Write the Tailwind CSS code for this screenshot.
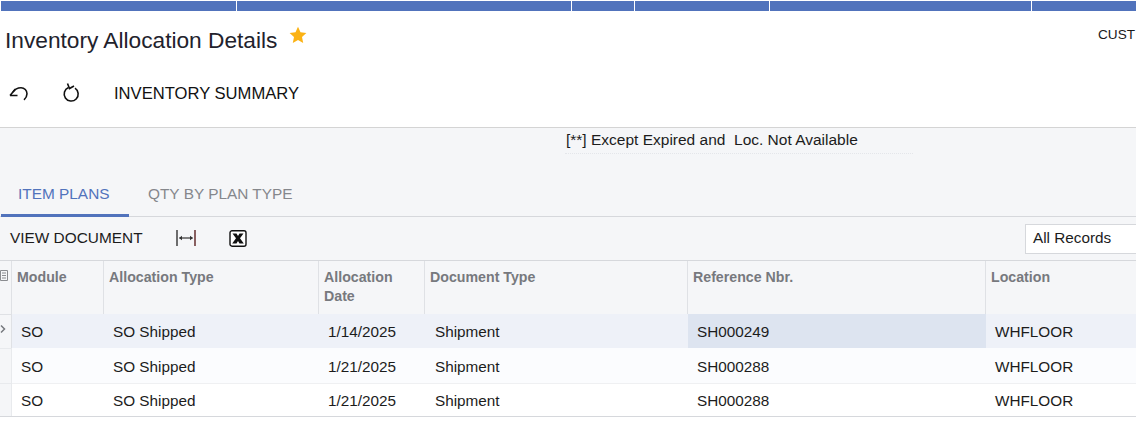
<!DOCTYPE html>
<html>
<head>
<meta charset="utf-8">
<script src="https://cdn.jsdelivr.net/npm/@tailwindcss/browser@4"></script>
</head>
<body class="bg-white">
<div class="w-[1136px] h-[435px] overflow-hidden font-['Liberation_Sans',Arial,sans-serif] text-[#1a1a1a] flex flex-col">
  <!-- top menu bar -->
  <div class="h-[11px] pt-px pl-px shrink-0 flex gap-px">
    <div class="w-[235px] bg-[#5173bc]"></div>
    <div class="w-[334px] bg-[#5173bc]"></div>
    <div class="w-[62px] bg-[#5173bc]"></div>
    <div class="w-[134px] bg-[#5173bc]"></div>
    <div class="w-[261px] bg-[#5173bc]"></div>
    <div class="flex-1 bg-[#5173bc]"></div>
  </div>
  <!-- title -->
  <div class="h-[56px] shrink-0 flex justify-between pl-[5px]">
    <div class="flex items-start">
      <span class="text-[22.7px] leading-[28px] mt-[15px] text-[#22222c]">Inventory Allocation Details</span>
      <svg class="ml-[12px] mt-[15px]" width="18" height="18" viewBox="0 0 18 18"><path d="M9 .8l2.500 5.500 5.900.7-4.400 4 1.200 5.900L9 14l-5.200 2.900L5 11 .6 7l5.900-.7z" fill="#fbb214"/></svg>
    </div>
    <span class="text-[13.6px] leading-[16px] mt-[16px] w-[38px] overflow-hidden whitespace-nowrap">CUST</span>
  </div>
  <!-- toolbar -->
  <div class="h-[61px] shrink-0 border-b border-[#d4d4d4] flex items-start pl-[8px] pt-[15px]">
    <svg class="mt-[1px]" width="21" height="20" viewBox="0 0 21 20" fill="none" stroke="#111" stroke-width="1.600"><path d="M2 12.500L7.500 6M2 12.500H9.500"/><path d="M5 9C7 6 10 4.800 13 4.800c3.500 0 6 2.700 6 6 0 2.300-1.200 4.400-3 6"/></svg>
    <svg class="ml-[32px]" width="20" height="21" viewBox="0 0 20 21" fill="none" stroke="#111" stroke-width="1.600"><path d="M14 6.200A7 7 0 1 1 7.500 5.600"/><path d="M6.500 1.500L8.500 6.500 13 4"/></svg>
    <span class="ml-[33px] text-[16.6px] leading-[22px] mt-[1px] text-[#111]">INVENTORY SUMMARY</span>
  </div>
  <!-- content -->
  <div class="h-[289px] shrink-0 bg-[#f5f6f8] flex flex-col">
    <div class="h-[37px] shrink-0 pl-[566px]">
      <div class="w-[348px] h-[26px] -ml-[1px] pl-[1px] border-b border-dotted border-[#e4e6ea] text-[15.5px] leading-[24px] whitespace-pre text-[#1c1c1c]">[**] Except Expired and  Loc. Not Available</div>
    </div>
    <div class="h-[52px] shrink-0 border-b border-[#d6d8dc] flex items-end text-[15.4px] leading-[18px]">
      <div class="w-[128px] h-[38px] ml-px pl-[17px] pt-[6px] border-b-[3px] border-[#5173bc] text-[#5173bc] -mb-px">ITEM PLANS</div>
      <div class="h-[38px] ml-[19px] pt-[6px] text-[#85878c] -mb-px">QTY BY PLAN TYPE</div>
    </div>
    <div class="h-[44px] shrink-0 border-b border-[#d6d8dc] flex items-start pl-[10px]">
      <span class="text-[15.4px] leading-[18px] mt-[12px] text-[#1c1c1c]">VIEW DOCUMENT</span>
      <svg class="ml-[33px] mt-[12px]" width="20" height="18" viewBox="0 0 20 18" fill="none"><path d="M1 1v16" stroke="#333" stroke-width="1.400"/><path d="M19 1v16" stroke="#5a2020" stroke-width="1.400"/><path d="M3.500 9h13" stroke="#333" stroke-width="1.200"/><path d="M3 9l3-2.200v4.400zM17 9l-3-2.200v4.400z" fill="#333"/></svg>
      <svg class="ml-[33px] mt-[13px]" width="18" height="17" viewBox="0 0 18 17"><rect x="1" y=".8" width="16" height="15.400" rx="2" fill="#fff" stroke="#111" stroke-width="1.400"/><path d="M3.500 3.500h4L9 6l1.500-2.500h4L11 8.300l3.800 5.200h-4.300L9 11l-1.500 2.500H3.200L7 8.300z" fill="#111"/></svg>
      <div class="ml-auto mt-[7px] w-[111px] h-[30px] bg-white border border-r-0 border-[#d6d8dc] pl-[7px] text-[15.3px] leading-[26px] text-[#1c1c1c]">All Records</div>
    </div>
    <div class="grid grid-cols-[12px_92px_215px_106px_263px_298px_150px] grid-rows-[53px_34px_35px_33px] border-b border-[#d6d8dc] text-[15.300px] text-[#1c1c1c]">
      <!-- header -->
      <div class="border-r border-[#dfe1e5] pt-[8px] overflow-hidden">
        <svg width="10" height="13" viewBox="0 0 10 13" class="-ml-[1px]" fill="none" stroke="#8a8c90" stroke-width="1"><path d="M1.500 1.500h7v10h-7zM3 4h4M3 6.500h4M3 9h4"/></svg>
      </div>
      <div class="border-r border-[#dfe1e5] pl-[5px] pt-[7px] text-[14.2px] leading-[19px] font-bold text-[#77797e]">Module</div>
      <div class="border-r border-[#dfe1e5] pl-[5px] pt-[7px] text-[14.2px] leading-[19px] font-bold text-[#77797e]">Allocation Type</div>
      <div class="border-r border-[#dfe1e5] pl-[5px] pt-[7px] text-[14.2px] leading-[19px] font-bold text-[#77797e]">Allocation<br>Date</div>
      <div class="border-r border-[#dfe1e5] pl-[5px] pt-[7px] text-[14.2px] leading-[19px] font-bold text-[#77797e]">Document Type</div>
      <div class="border-r border-[#dfe1e5] pl-[5px] pt-[7px] text-[14.2px] leading-[19px] font-bold text-[#77797e]">Reference Nbr.</div>
      <div class="pl-[5px] pt-[7px] text-[14.2px] leading-[19px] font-bold text-[#77797e]">Location</div>
      <!-- row 1 -->
      <div class="border-t border-r border-[#dfe1e5] flex items-center overflow-hidden"><svg width="7" height="10" viewBox="0 0 7 10" class="-mt-[6px]" fill="none" stroke="#77797e" stroke-width="1.500"><path d="M1 1.500L4.500 5 1 8.500"/></svg></div>
      <div class="bg-[#eef1f8] pl-[9px] leading-[36px]">SO</div>
      <div class="bg-[#eef1f8] pl-[9px] leading-[36px]">SO Shipped</div>
      <div class="bg-[#eef1f8] pl-[9px] leading-[36px]">1/14/2025</div>
      <div class="bg-[#eef1f8] pl-[10px] leading-[36px]">Shipment</div>
      <div class="bg-[#dde4f0] pl-[9px] leading-[36px]">SH000249</div>
      <div class="bg-[#eef1f8] pl-[9px] leading-[36px]">WHFLOOR</div>
      <!-- row 2 -->
      <div class="border-t border-r border-[#e8eaed]"></div>
      <div class="bg-[#fbfcfe] pl-[9px] leading-[38px]">SO</div>
      <div class="bg-[#fbfcfe] pl-[9px] leading-[38px]">SO Shipped</div>
      <div class="bg-[#fbfcfe] pl-[9px] leading-[38px]">1/21/2025</div>
      <div class="bg-[#fbfcfe] pl-[10px] leading-[38px]">Shipment</div>
      <div class="bg-[#fbfcfe] pl-[9px] leading-[38px]">SH000288</div>
      <div class="bg-[#fbfcfe] pl-[9px] leading-[38px]">WHFLOOR</div>
      <!-- row 3 -->
      <div class="border-t border-r border-[#e8eaed]"></div>
      <div class="bg-white border-t border-[#eff0f2] pl-[9px] leading-[33px]">SO</div>
      <div class="bg-white border-t border-[#eff0f2] pl-[9px] leading-[33px]">SO Shipped</div>
      <div class="bg-white border-t border-[#eff0f2] pl-[9px] leading-[33px]">1/21/2025</div>
      <div class="bg-white border-t border-[#eff0f2] pl-[10px] leading-[33px]">Shipment</div>
      <div class="bg-white border-t border-[#eff0f2] pl-[9px] leading-[33px]">SH000288</div>
      <div class="bg-white border-t border-[#eff0f2] pl-[9px] leading-[33px]">WHFLOOR</div>
    </div>
  </div>
</div>
</body>
</html>
